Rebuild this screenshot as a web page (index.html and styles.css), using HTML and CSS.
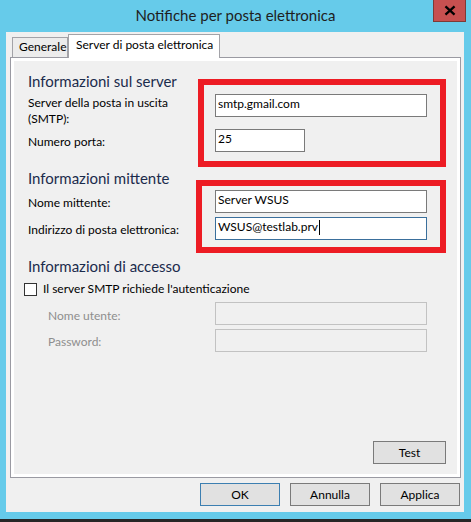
FILE: index.html
```html
<!DOCTYPE html>
<html lang="it">
<head>
<meta charset="utf-8">
<title>Notifiche per posta elettronica</title>
<link rel="stylesheet" href="styles.css">
</head>
<body>
<div class="window">
  <div class="titlebar">
    <div class="title">Notifiche per posta elettronica</div>
    <button class="close" aria-label="Chiudi">
      <svg width="33" height="22" viewBox="0 0 33 22"><path d="M13.3 8.2 L20.7 14.8 M20.7 8.2 L13.3 14.8" stroke="#000" stroke-width="2.3" stroke-linecap="square" fill="none"/></svg>
    </button>
  </div>

  <div class="client">
    <div class="tabs">
      <div class="tab">Generale</div>
      <div class="tab tab-active">Server di posta elettronica</div>
    </div>

    <div class="panel">
      <div class="page">
        <div class="group-title gt-first">Informazioni sul server</div>
        <div class="row row-smtp">
          <div class="label label-top">Server della posta in uscita<br>(SMTP):</div>
          <div class="textbox tb-wide">smtp.gmail.com</div>
        </div>
        <div class="row row-port">
          <div class="label">Numero porta:</div>
          <div class="textbox tb-port">25</div>
        </div>

        <div class="group-title">Informazioni mittente</div>
        <div class="row row-name">
          <div class="label">Nome mittente:</div>
          <div class="textbox tb-wide">Server WSUS</div>
        </div>
        <div class="row row-mail">
          <div class="label">Indirizzo di posta elettronica:</div>
          <div class="textbox tb-wide tb-focus">WSUS@testlab.prv<span class="caret"></span></div>
        </div>

        <div class="group-title">Informazioni di accesso</div>
        <label class="check-row">
          <span class="checkbox"></span>
          <span>Il server SMTP richiede l'autenticazione</span>
        </label>
        <div class="row row-user">
          <div class="label label-disabled label-user">Nome utente:</div>
          <div class="textbox tb-wide tb-disabled"></div>
        </div>
        <div class="row row-pass">
          <div class="label label-disabled">Password:</div>
          <div class="textbox tb-wide tb-disabled"></div>
        </div>

        <div class="page-footer">
          <button class="btn btn-test">Test</button>
        </div>
      </div>
      <div class="mark mark-server"></div>
      <div class="mark mark-sender"></div>
    </div>

    <div class="actions">
      <button class="btn btn-default">OK</button>
      <button class="btn">Annulla</button>
      <button class="btn">Applica</button>
    </div>
  </div>
  <div class="taskbar-edge"></div>
</div>
</body>
</html>
```
FILE: styles.css
```css
* { box-sizing: border-box; }

html, body {
  margin: 0;
  padding: 0;
}

body {
  width: 471px;
  height: 522px;
  overflow: hidden;
  background: #66cbea;
  font-family: "Lato", "Open Sans", sans-serif;
  font-size: 12px;
  color: #000;
}

.window {
  display: flex;
  flex-direction: column;
  height: 522px;
}

/* title bar */
.titlebar {
  height: 32px;
  display: grid;
  grid-template-columns: 1fr auto 1fr;
  align-items: start;
}

.title {
  grid-column: 2;
  padding-top: 5px;
  font-size: 15px;
  line-height: 20px;
  color: #1e1e1e;
  white-space: nowrap;
}

.close {
  grid-column: 3;
  justify-self: end;
  width: 33px;
  height: 22px;
  margin: 0 5px 0 0;
  padding: 0;
  border: 1px solid #7e3a36;
  border-top: none;
  background: #c75050;
  display: block;
}

.close svg { display: block; margin: -1px 0 0 -1px; }

/* client */
.client {
  height: 480px;
  margin: 0 7px 0 6px;
  padding: 2px 3px 0 4px;
  background: #f0f0f0;
  display: flex;
  flex-direction: column;
}

.tabs {
  display: flex;
  align-items: flex-end;
  height: 23px;
  margin-left: 2px;
}

.tab {
  height: 20px;
  width: 56px;
  padding: 1px 0 0 6px;
  border: 1px solid #a3a3a8;
  border-bottom: none;
  background: #ececec;
  line-height: 16px;
  white-space: nowrap;
}

.tab-active {
  position: relative;
  z-index: 1;
  height: 24px;
  width: 152px;
  margin-bottom: -1px;
  padding: 2px 0 0 7px;
  background: #fff;
}

.panel {
  position: relative;
  height: 421px;
  width: 451px;
  border: 1px solid #9a9aa2;
  padding: 3px;
  background: #fff;
}

.page {
  height: 413px;
  background: #f0f0f0;
  padding: 0 0 0 14px;
  display: flex;
  flex-direction: column;
}

.group-title {
  margin-top: 16px;
  font-size: 15px;
  line-height: 20px;
  color: #1b2b4c;
  white-space: nowrap;
}

.gt-first { margin-top: 10px; }

.row {
  display: grid;
  grid-template-columns: 187px auto;
  align-items: start;
}

.row-smtp { margin-top: 3px; }
.row-port { margin-top: 2px; }
.row-name { margin-top: 2px; }
.row-mail { margin-top: 4px; }
.row-user { margin-top: 5px; }
.row-pass { margin-top: 4px; }

.label {
  padding-top: 5px;
  line-height: 16px;
  white-space: nowrap;
}

.label-top { padding-top: 1px; }
.label-user { padding-top: 6px; }

.label-disabled {
  color: #8e8e8e;
  padding-left: 20px;
}

.textbox {
  height: 23px;
  border: 1px solid #7a7a7a;
  background: #fff;
  padding: 0 2px;
  line-height: 17px;
  white-space: nowrap;
}

.tb-wide { width: 212px; }
.tb-port { width: 90px; }

.tb-focus { border-color: #3a6f9c; }

.tb-disabled {
  border-color: #c2c2c2;
  background: #f0f0f0;
}

.caret {
  display: inline-block;
  width: 1px;
  height: 15px;
  margin-left: 1px;
  background: #000;
  vertical-align: -4px;
}

.check-row {
  margin: 5px 0 0 -4px;
  display: flex;
  align-items: flex-start;
  gap: 6px;
  line-height: 16px;
  white-space: nowrap;
}

.checkbox {
  width: 13px;
  height: 13px;
  margin-top: 2px;
  border: 1px solid #333;
  background: #fff;
  flex: none;
}

.page-footer {
  margin-top: auto;
  padding: 0 11px 10px 0;
  display: flex;
  justify-content: flex-end;
}

.btn {
  height: 23px;
  width: 80px;
  margin: 0;
  padding: 0;
  border: 1px solid #7a7a7a;
  background: #e1e1e1;
  font-family: inherit;
  font-size: 12px;
  line-height: 21px;
  color: #000;
  text-align: center;
}

.btn-test { width: 73px; }

.btn-default { border-color: #3c7fb1; }

.actions {
  margin: 5px 1px 0 0;
  display: flex;
  justify-content: flex-end;
  gap: 10px;
}

/* annotation overlays */
.mark {
  position: absolute;
  border: 6px solid #ed1c24;
  pointer-events: none;
}

.mark-server {
  left: 187px;
  top: 21px;
  width: 248px;
  height: 88px;
}

.mark-sender {
  left: 185px;
  top: 122px;
  width: 250px;
  height: 73px;
}

.taskbar-edge {
  margin-top: 7px;
  height: 3px;
  background: #262626;
}
```
